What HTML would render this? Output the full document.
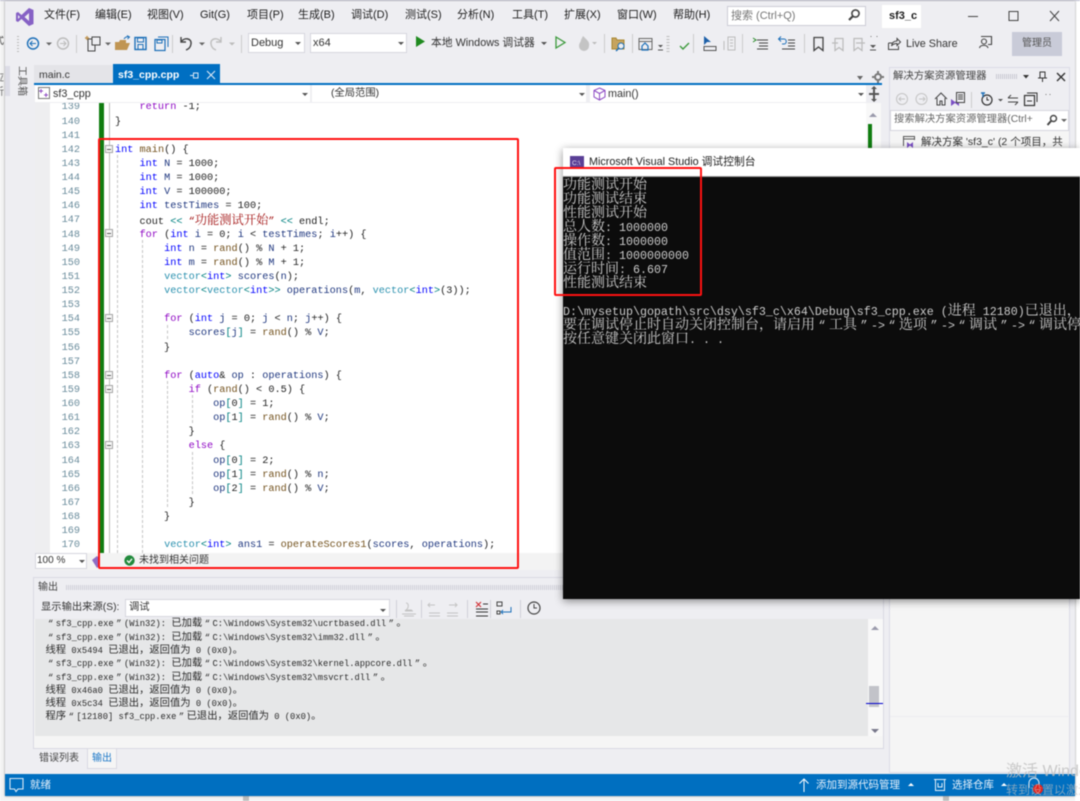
<!DOCTYPE html>
<html lang="zh"><head><meta charset="utf-8"><title>sf3_c</title>
<style>
html,body{margin:0;padding:0;width:1080px;height:801px;overflow:hidden;background:#fff}
#r{position:absolute;left:0;top:0;width:1080px;height:801px;overflow:hidden;filter:blur(.4px);font-family:"Liberation Sans","Noto Sans CJK SC",sans-serif;font-size:11px;color:#1e1e1e}
.a{position:absolute}.t{position:absolute;white-space:nowrap;line-height:14px}
svg{position:absolute;overflow:visible}
.code{position:absolute;font-family:"Liberation Mono",monospace;font-size:10.22px;color:#222}
.l{height:14.14px;line-height:14.14px;white-space:pre}
.code i{font-style:normal;font-family:"Noto Serif CJK SC",serif;font-size:12.27px;line-height:1}
.k{color:#0000ff}.c{color:#8f08c4}.f{color:#74531f}.y{color:#2b91af}.v{color:#1f377f}.o{color:#008080}.s{color:#a31515}
.con{position:absolute;left:0;white-space:pre;font-family:"Liberation Mono",monospace;font-size:11.67px;line-height:14px;color:#cccccc}
.con i{font-style:normal;font-family:"Noto Serif CJK SC",serif;font-size:14px;line-height:1}
.con b{font-weight:normal;display:inline-block;width:14px;text-align:center}
.out{position:absolute;left:45.5px;white-space:pre;font-family:"Liberation Mono",monospace;font-size:8.77px;line-height:13px;color:#2a2a2a}
.out i{font-style:normal;font-family:"Noto Sans CJK SC",sans-serif;font-size:10.3px;line-height:1}
.out b{font-weight:normal;display:inline-block;width:10.3px;text-align:center}
.gd{position:absolute;width:0;border-left:1px dashed #c4c4c4}
.fb{position:absolute;left:105px;width:6px;height:6px;border:1px solid #a5a5a5;background:#f6f6f6}
.fb:after{content:"";position:absolute;left:1px;top:3px;width:4px;height:1px;background:#555}
.combo{position:absolute;background:#fff;border:1px solid #d6d6de;box-sizing:border-box}
.arr{position:absolute;width:0;height:0;border-left:3px solid transparent;border-right:3px solid transparent;border-top:3px solid #555}
</style></head><body><div id="r">

<!-- background window sliver -->
<div class="a" style="left:0;top:0;width:6px;height:801px;background:#f3f3f3"></div>
<div class="a" style="left:0;top:0;width:1080px;height:1px;background:#b9b9cc"></div>
<div class="a" style="left:5px;top:796px;width:1070px;height:5px;background:#f4f4f4"></div>
<div class="a" style="left:243px;top:796px;width:6px;height:5px;background:#bdbdbd"></div>
<div class="a" style="left:943px;top:796px;width:6px;height:5px;background:#bdbdbd"></div>
<div class="a" style="left:0;top:36px;width:5px;height:12px;overflow:hidden"><div class="t" style="left:-6px;top:-1px;font-size:10px;color:#444">式</div></div>
<div class="a" style="left:0;top:72px;width:5px;height:26px;overflow:hidden"><div class="t" style="left:-6px;top:0;font-size:10px;color:#666">应</div><div class="t" style="left:-6px;top:14px;font-size:10px;color:#666">析</div></div>

<!-- main window -->
<div class="a" style="left:5px;top:1px;width:1070px;height:795px;background:#eeeef2;box-shadow:0 0 2px #888"></div>

<!-- logo -->
<svg style="left:15px;top:7px" width="20" height="20" viewBox="0 0 20 20"><path d="M14 1 L18.5 3 V17 L14 19 L6.5 12 L3 15 L1 14 V6 L3 5 L6.5 8 Z M14 6 L9.5 10 L14 14 Z M3 8 V12 L5 10 Z" fill="#8661c5" fill-rule="evenodd"/></svg>

<!-- menu -->
<div class="t" style="left:44px;top:8px">文件(F)</div>
<div class="t" style="left:95px;top:8px">编辑(E)</div>
<div class="t" style="left:147px;top:8px">视图(V)</div>
<div class="t" style="left:200px;top:8px">Git(G)</div>
<div class="t" style="left:247px;top:8px">项目(P)</div>
<div class="t" style="left:298px;top:8px">生成(B)</div>
<div class="t" style="left:351px;top:8px">调试(D)</div>
<div class="t" style="left:405px;top:8px">测试(S)</div>
<div class="t" style="left:457px;top:8px">分析(N)</div>
<div class="t" style="left:512px;top:8px">工具(T)</div>
<div class="t" style="left:564px;top:8px">扩展(X)</div>
<div class="t" style="left:617px;top:8px">窗口(W)</div>
<div class="t" style="left:673px;top:8px">帮助(H)</div>
<div class="combo" style="left:727px;top:6px;width:139px;height:20px;border-color:#ccccd6"></div>
<div class="t" style="left:731px;top:9px;color:#777">搜索 (Ctrl+Q)</div>
<svg style="left:847px;top:8px" width="14" height="14" viewBox="0 0 14 14" fill="none" stroke="#444" stroke-width="1.6"><circle cx="8.5" cy="5.5" r="3.6"/><path d="M6 8 L2 12" stroke-width="2.2"/></svg>
<div class="a" style="left:882px;top:5px;width:39px;height:23px;background:#fff"></div>
<div class="t" style="left:889px;top:9px;font-weight:bold;font-size:11px">sf3_c</div>
<svg style="left:965px;top:8px" width="100" height="16" viewBox="0 0 100 16" fill="none" stroke="#444"><path d="M3 8.5 H13"/><rect x="44" y="3.5" width="9" height="9"/><path d="M85 3 L94 13 M94 3 L85 13"/></svg>

<!-- toolbar -->
<svg style="left:16px;top:33px" width="520" height="22" viewBox="0 0 520 22" fill="none">
<path d="M2 3 V20" stroke="#bbb" stroke-dasharray="1 2" stroke-width="2"/>
<circle cx="17" cy="10.5" r="5.5" stroke="#1c6fb8" stroke-width="1.4"/><path d="M20 10.5 H14 M16.5 8 L14 10.5 L16.5 13" stroke="#1c6fb8"/>
<path d="M30 9.5 h6 l-3 3z" fill="#666"/>
<circle cx="47" cy="10.5" r="5.5" stroke="#bcbcbc" stroke-width="1.4"/><path d="M44 10.5 H50 M47.500 8 L50 10.5 L47.500 13" stroke="#bcbcbc"/>
<path d="M60.500 2 V20" stroke="#ccc"/>
<rect x="72" y="6" width="7" height="12" stroke="#444"/><rect x="76" y="4" width="8" height="8" stroke="#444" fill="#eeeef2"/><path d="M69 5 h4 M71 3 v4" stroke="#c09553" stroke-width="1.4"/>
<path d="M89 9.500 h6 l-3 3z" fill="#666"/>
<path d="M99 9 h4 l1-2 h6 v3 h4 l-3 7 h-12z" fill="#c09553"/><path d="M108 6 q2-3 5-2 M111 2.500 l2.500 1.500 -2 2" stroke="#1c6fb8"/>
<rect x="119" y="4.500" width="11" height="12" stroke="#1c6fb8" stroke-width="1.4"/><rect x="121.500" y="5" width="6" height="4" stroke="#1c6fb8"/><rect x="122" y="11.500" width="5" height="5" stroke="#1c6fb8"/>
<rect x="139" y="6.500" width="10" height="11" stroke="#1c6fb8" stroke-width="1.2"/><path d="M142 4 H152 V14" stroke="#1c6fb8"/><rect x="141" y="7" width="5" height="3" stroke="#1c6fb8"/>
<path d="M156.500 2 V20" stroke="#ccc"/>
<path d="M165 4 V9 H170 M165 9 C168 4 176 5 175 11 C174.500 15 172 16 170 17" stroke="#444" stroke-width="1.4"/>
<path d="M183 9.500 h6 l-3 3z" fill="#666"/>
<path d="M205 4 V9 H200 M205 9 C202 4 194 5 195 11 C195.500 15 198 16 200 17" stroke="#bfbfbf" stroke-width="1.4"/>
<path d="M213 9.500 h6 l-3 3z" fill="#bbb"/>
<path d="M225.500 2 V20" stroke="#ccc"/>
</svg>
<div class="combo" style="left:248px;top:33px;width:57px;height:20px"></div>
<div class="t" style="left:251px;top:36px;font-size:11px;color:#333">Debug</div><div class="arr" style="left:295px;top:42px"></div>
<div class="combo" style="left:310px;top:33px;width:97px;height:20px"></div>
<div class="t" style="left:313px;top:36px;color:#333">x64</div><div class="arr" style="left:398px;top:42px"></div>
<svg style="left:415px;top:35px" width="12" height="14"><path d="M1 1 L10 6.500 L1 12z" fill="#1f8a1f"/></svg>
<div class="t" style="left:431px;top:36px;color:#333;font-size:10.800px">本地 Windows 调试器</div>
<div class="arr" style="left:541px;top:42px"></div>
<svg style="left:552px;top:33px" width="350" height="22" viewBox="0 0 350 22" fill="none">
<path d="M4 4 L13 9.500 L4 15z" stroke="#3c9a3c" stroke-width="1.3"/>
<path d="M31 3 c4 4 7 6 6 10 a5 5 0 0 1-10 0 c0-3 2-4 2-6z" fill="#c4c4c4"/><path d="M40 9 h5 l-2.500 2.500z" fill="#bbb"/>
<path d="M52.500 1 V20" stroke="#ccc"/>
<path d="M60 5 h4 l1 2 h7 v9 h-12z" fill="#c6a45e" stroke="#a98733"/><circle cx="69" cy="13" r="3" stroke="#1c6fb8" fill="#eee"/><path d="M67 15 L64 18" stroke="#1c6fb8" stroke-width="1.400"/>
<path d="M80.500 1 V20" stroke="#ccc"/>
<rect x="87" y="5.500" width="13" height="11" stroke="#666"/><path d="M87 8.500 h13" stroke="#666"/><path d="M90 13 l3-3 3 3 v4 h-6z" stroke="#1c6fb8" stroke-width="1.200"/>
<path d="M106 12 h5 l-2.500 2.500z" fill="#555"/><path d="M106 17 h5" stroke="#555"/>
<path d="M116 3 V19" stroke="#bbb" stroke-dasharray="1 2" stroke-width="3"/>
<path d="M128 13 l3 3 6-6" stroke="#3c9a3c" stroke-width="1.400"/>
<path d="M141.500 1 V20" stroke="#ccc"/>
<path d="M152 3 V12 L155 9 H159z" fill="#1c5fa8"/><rect x="152" y="13.500" width="12" height="4" stroke="#555"/>
<path d="M176 4 h7 v13 h-7z M172 8 v9 M178 7 h3 M178 10 h3 M178 13 h3" stroke="#bcbcbc"/>
<path d="M190.500 1 V20" stroke="#ccc"/>
<path d="M205 7 h11 M207 10 h9 M207 13 h9 M205 16 h11" stroke="#444"/><path d="M201 5 l3 2 -3 2" stroke="#2a8a2a"/>
<path d="M236 7 h7 M236 10 h7 M236 13 h7 M230 16 h13" stroke="#444"/><path d="M227 6 h5 c3 0 3 5 0 5 h-2 M229 3.500 l-2.500 2.500 2.500 2.500" stroke="#1c6fb8"/>
<path d="M252.500 1 V20" stroke="#ccc"/>
<path d="M262 4.500 h9 v13 l-4.500-3.500 -4.500 3.500z" stroke="#444" stroke-width="1.300"/>
<path d="M283 5.500 h8 v12 l-4-3 -4 3z M280 10 h6" stroke="#bbb" stroke-width="1.200"/>
<path d="M302 5.500 h8 v12 l-4-3 -4 3z M304 10 h9" stroke="#bbb" stroke-width="1.200"/>
<path d="M319 3 v1 M325 3 v1" stroke="#777"/><path d="M318 12 h6 l-3 3z" fill="#555"/><path d="M318 17 h6" stroke="#555"/>
</svg>
<svg style="left:887px;top:36px" width="14" height="15" fill="none" stroke="#444"><path d="M1.500 7 V13.500 H11.500 V10 M1.500 7 H5 M4.500 10 C5 6.500 7 5 10 5 V2.500 L13.500 6 L10 9.500 V7.500 C8 7.500 6 8 4.500 10z"/></svg>
<div class="t" style="left:906px;top:37px;color:#333;font-size:10.800px">Live Share</div>
<svg style="left:978px;top:35px" width="15" height="15" fill="none" stroke="#444" stroke-width="1.100"><path d="M3 1.500 H13.500 V9.500 H10"/><circle cx="6" cy="6.500" r="2.500"/><path d="M1.500 13 C2 9.500 9.500 9.500 10 13"/></svg>
<div class="a" style="left:1012px;top:32px;width:50px;height:24px;background:#c9cbd8"></div>
<div class="t" style="left:1022px;top:37px;color:#555;font-size:10px">管理员</div>

<!-- left toolbox strip -->
<div class="a" style="left:5px;top:66px;width:5px;height:30px;background:#dcdce6"></div>
<div class="a" style="left:15px;top:65px;width:12px;height:31px;font-size:10px;line-height:12px;color:#555;writing-mode:vertical-rl;text-orientation:sideways;white-space:nowrap;text-align:center">工具箱</div>

<!-- doc tabs -->
<div class="a" style="left:34px;top:65px;width:80px;height:18px;background:#e4e4e8"></div>
<div class="t" style="left:39px;top:68px;color:#333;font-size:10.500px">main.c</div>
<div class="a" style="left:113px;top:64px;width:107px;height:20px;background:#006fc2"></div>
<div class="t" style="left:118px;top:68px;color:#fff;font-size:10.500px;font-weight:bold">sf3_cpp.cpp</div>
<svg style="left:188px;top:68px" width="30" height="14" fill="none" stroke="#dbe8f5"><path d="M2 7.500 H5 M5.500 5 V10 H10 V5z"/><path d="M19 3 L27 11 M27 3 L19 11" stroke-width="1.100"/></svg>
<div class="a" style="left:34px;top:83px;width:848px;height:2px;background:#006fc2"></div>
<div class="arr" style="left:857px;top:76px;border-top-color:#666;border-left-width:3.500px;border-right-width:3.500px;border-top-width:4px"></div>
<svg style="left:872px;top:71px" width="12" height="12" fill="#777"><circle cx="6" cy="6" r="3" fill="none" stroke="#777" stroke-width="2"/><path d="M5 0 h2 v2 h-2z M5 10 h2 v2 h-2z M0 5 h2 v2 h-2z M10 5 h2 v2 h-2z"/></svg>

<!-- nav bar -->
<div class="a" style="left:35px;top:85px;width:847px;height:18px;background:#eeeef2"></div>
<div class="a" style="left:35px;top:85px;width:275px;height:17px;background:#fff"></div>
<svg style="left:38px;top:87px" width="13" height="13" fill="none"><rect x=".5" y=".5" width="11" height="11" stroke="#777"/><path d="M3 2 v4 M1 4 h4 M8 6 v4 M6 8 h4" stroke="#8e4cc4"/></svg>
<div class="t" style="left:53px;top:87px;font-size:10.800px;color:#333">sf3_cpp</div><div class="arr" style="left:302px;top:93px"></div>
<div class="a" style="left:312px;top:85px;width:274px;height:17px;background:#fff"></div>
<div class="t" style="left:331px;top:87px;font-size:10.300px;color:#333">(全局范围)</div><div class="arr" style="left:579px;top:93px"></div>
<div class="a" style="left:590px;top:85px;width:276px;height:17px;background:#fff"></div>
<svg style="left:593px;top:87px" width="14" height="14" fill="none" stroke="#8e4cc4"><path d="M6.500 1 L12 3.500 V10 L6.500 13 L1 10 V3.500z M1 3.500 L6.500 6.500 L12 3.500 M6.500 6.500 V13"/></svg>
<div class="t" style="left:608px;top:87px;font-size:10.800px;color:#333">main()</div><div class="arr" style="left:858px;top:93px"></div>
<svg style="left:867px;top:86px" width="14" height="16" fill="#555"><path d="M6 3 h2 v4 h4 v2 h-4 v4 h-2 v-4 h-4 v-2 h4z"/><path d="M4 3 L7 0 L10 3z M4 13 L7 16 L10 13z"/></svg>

<!-- editor -->
<div class="a" style="left:35px;top:103px;width:15px;height:450px;background:#eeeef0"></div>
<div class="a" style="left:50px;top:103px;width:816px;height:450px;background:#fff"></div>
<div class="a" style="left:866px;top:103px;width:15px;height:450px;background:#f8f8f8"></div>
<div class="a" style="left:868px;top:124px;width:4px;height:30px;background:#107c10"></div>
<svg style="left:869px;top:112px" width="9" height="6"><path d="M0 5 L4 1 L8 5z" fill="#9a9aab"/></svg>

<div class="a" style="left:50px;top:103px;width:815px;height:450px;overflow:hidden">
<div class="a" style="left:49px;top:0;width:5px;height:450px;background:#107c10"></div>
<div class="a" style="left:59px;top:0;width:1px;height:450px;background:#bdbdbd"></div>
<div class="code" style="left:0;top:-2.600px;width:30px;text-align:right;color:#6a8c9c">
<div class="l">139</div><div class="l">140</div><div class="l">141</div><div class="l">142</div><div class="l">143</div><div class="l">144</div><div class="l">145</div><div class="l">146</div><div class="l">147</div><div class="l">148</div><div class="l">149</div><div class="l">150</div><div class="l">151</div><div class="l">152</div><div class="l">153</div><div class="l">154</div><div class="l">155</div><div class="l">156</div><div class="l">157</div><div class="l">158</div><div class="l">159</div><div class="l">160</div><div class="l">161</div><div class="l">162</div><div class="l">163</div><div class="l">164</div><div class="l">165</div><div class="l">166</div><div class="l">167</div><div class="l">168</div><div class="l">169</div><div class="l">170</div></div>
<div class="code" style="left:65px;top:-2.600px">
<div class="l">    <span class="c">return</span> -1;</div>
<div class="l">}</div>
<div class="l"> </div>
<div class="l"><span class="k">int</span> <span class="f">main</span>() {</div>
<div class="l">    <span class="k">int</span> <span class="v">N</span> = 1000;</div>
<div class="l">    <span class="k">int</span> <span class="v">M</span> = 1000;</div>
<div class="l">    <span class="k">int</span> <span class="v">V</span> = 100000;</div>
<div class="l">    <span class="k">int</span> <span class="v">testTimes</span> = 100;</div>
<div class="l">    cout <span class="o">&lt;&lt;</span> <span class="s">“<i>功能测试开始</i>”</span> <span class="o">&lt;&lt;</span> endl;</div>
<div class="l">    <span class="c">for</span> (<span class="k">int</span> <span class="v">i</span> = 0; <span class="v">i</span> &lt; <span class="v">testTimes</span>; <span class="v">i</span>++) {</div>
<div class="l">        <span class="k">int</span> <span class="v">n</span> = <span class="f">rand</span>() % <span class="v">N</span> + 1;</div>
<div class="l">        <span class="k">int</span> <span class="v">m</span> = <span class="f">rand</span>() % <span class="v">M</span> + 1;</div>
<div class="l">        <span class="y">vector</span><span class="o">&lt;</span><span class="k">int</span><span class="o">&gt;</span> <span class="v">scores</span>(<span class="v">n</span>);</div>
<div class="l">        <span class="y">vector</span><span class="o">&lt;</span><span class="y">vector</span><span class="o">&lt;</span><span class="k">int</span><span class="o">&gt;&gt;</span> <span class="v">operations</span>(<span class="v">m</span>, <span class="y">vector</span><span class="o">&lt;</span><span class="k">int</span><span class="o">&gt;</span>(3));</div>
<div class="l"> </div>
<div class="l">        <span class="c">for</span> (<span class="k">int</span> <span class="v">j</span> = 0; <span class="v">j</span> &lt; <span class="v">n</span>; <span class="v">j</span>++) {</div>
<div class="l">            <span class="v">scores</span><span class="o">[</span><span class="v">j</span><span class="o">]</span> = <span class="f">rand</span>() % <span class="v">V</span>;</div>
<div class="l">        }</div>
<div class="l"> </div>
<div class="l">        <span class="c">for</span> (<span class="k">auto</span>&amp; <span class="v">op</span> : <span class="v">operations</span>) {</div>
<div class="l">            <span class="c">if</span> (<span class="f">rand</span>() &lt; 0.5) {</div>
<div class="l">                <span class="v">op</span><span class="o">[</span>0<span class="o">]</span> = 1;</div>
<div class="l">                <span class="v">op</span><span class="o">[</span>1<span class="o">]</span> = <span class="f">rand</span>() % <span class="v">V</span>;</div>
<div class="l">            }</div>
<div class="l">            <span class="c">else</span> {</div>
<div class="l">                <span class="v">op</span><span class="o">[</span>0<span class="o">]</span> = 2;</div>
<div class="l">                <span class="v">op</span><span class="o">[</span>1<span class="o">]</span> = <span class="f">rand</span>() % <span class="v">n</span>;</div>
<div class="l">                <span class="v">op</span><span class="o">[</span>2<span class="o">]</span> = <span class="f">rand</span>() % <span class="v">V</span>;</div>
<div class="l">            }</div>
<div class="l">        }</div>
<div class="l"> </div>
<div class="l">        <span class="y">vector</span><span class="o">&lt;</span><span class="k">int</span><span class="o">&gt;</span> <span class="v">ans1</span> = <span class="f">operateScores1</span>(<span class="v">scores</span>, <span class="v">operations</span>);</div>
</div>
<!-- indent guides (editor-relative) -->
<div class="gd" style="left:67px;top:52px;height:398px"></div>
<div class="gd" style="left:92px;top:137px;height:313px"></div>
<div class="gd" style="left:117px;top:222px;height:14px"></div>
<div class="gd" style="left:117px;top:278px;height:126px"></div>
<div class="gd" style="left:142px;top:292px;height:28px"></div>
<div class="gd" style="left:142px;top:349px;height:42px"></div>
</div>
<div class="fb" style="top:145px"></div><div class="fb" style="top:229px"></div><div class="fb" style="top:314px"></div><div class="fb" style="top:371px"></div><div class="fb" style="top:385px"></div><div class="fb" style="top:441px"></div>

<!-- editor status -->
<div class="a" style="left:35px;top:553px;width:847px;height:17px;background:#f3f3f3"></div>
<div class="combo" style="left:35px;top:553px;width:52px;height:16px"></div>
<div class="t" style="left:37px;top:554px;font-size:10px;color:#333">100 %</div><div class="arr" style="left:79px;top:560px"></div>
<svg style="left:90px;top:554px" width="10" height="14"><path d="M2 6 l5-4 2 2 v8 l-2 2z" fill="#8e6cc4"/></svg>
<svg style="left:124px;top:555px" width="11" height="11"><circle cx="5.500" cy="5.500" r="5.200" fill="#218a3c"/><path d="M3 5.500 L5 7.500 L8 3.800" fill="none" stroke="#fff" stroke-width="1.300"/></svg>
<div class="t" style="left:139px;top:554px;font-size:10px;color:#333">未找到相关问题</div>

<!-- output panel -->
<div class="a" style="left:33px;top:577px;width:851px;height:172px;background:#f5f5f5;border:1px solid #d9d9e3;box-sizing:border-box"></div>
<div class="a" style="left:34px;top:578px;width:849px;height:41px;background:#eeeef2"></div>
<div class="t" style="left:38px;top:581px;font-size:10px;color:#444">输出</div>
<div class="a" style="left:66px;top:585px;width:815px;height:5px;background:repeating-linear-gradient(90deg,#cfcfd8 0 1px,transparent 1px 2px)"></div>
<div class="t" style="left:41px;top:601px;font-size:10.300px;color:#333">显示输出来源(S):</div>
<div class="combo" style="left:125px;top:599px;width:265px;height:18px"></div>
<div class="t" style="left:129px;top:601px;font-size:10.300px;color:#333">调试</div><div class="arr" style="left:380px;top:609px"></div>
<svg style="left:395px;top:598px" width="160" height="22" viewBox="0 0 160 22" fill="none">
<path d="M1.500 2 V20 M26.500 2 V20 M72.500 2 V20 M95.500 2 V20 M125.500 2 V20" stroke="#d0d0d8"/>
<path d="M7 16 h14 M9 18 h10 M10 13 h8 M11 5 c3 0 3 5 0 7 h6" stroke="#c4c4c4"/>
<path d="M34 15 h11 M34 18 h11 M40 7 h-7 M35 5 l-2 2 2 2" stroke="#c4c4c4"/>
<path d="M52 15 h11 M52 18 h11 M54 7 h8 M60 5 l2 2 -2 2" stroke="#c4c4c4"/>
<path d="M81 11 h12 M81 14 h12 M81 18 h12" stroke="#333"/><path d="M81 4 l5 5 M86 4 l-5 5" stroke="#d13438" stroke-width="1.200"/><path d="M88 6 h5" stroke="#333"/>
<path d="M106 14 h10 v-5 M106 14 l2-2 M106 14 l2 2" stroke="#1c6fb8"/><rect x="102" y="4" width="5" height="4" stroke="#444"/><rect x="102" y="13" width="3" height="3" stroke="#444"/>
<circle cx="139" cy="10" r="6" stroke="#444" stroke-width="1.200"/><path d="M139 6 v4 h3" stroke="#444"/>
</svg>
<div class="a" style="left:35px;top:619px;width:833px;height:117px;background:#e6e7e8;overflow:hidden"></div>
<div class="a" style="left:868px;top:619px;width:15px;height:117px;background:#f8f8f8"></div>
<svg style="left:871px;top:625px" width="9" height="6"><path d="M0 5 L4 1 L8 5z" fill="#9a9aab"/></svg>
<svg style="left:871px;top:728px" width="9" height="6"><path d="M0 1 L4 5 L8 1z" fill="#77778a"/></svg>
<div class="a" style="left:869px;top:686px;width:10px;height:21px;background:#c2c3c9"></div>
<div class="a" style="left:866px;top:703px;width:17px;height:1px;background:#0000cc"></div>

<div class="out" style="top:616.500px"><b>“</b>sf3_cpp.exe<b>”</b>(Win32): <i>已加载</i><b>“</b>C:\Windows\System32\ucrtbased.dll<b>”</b><i>。</i></div>
<div class="out" style="top:630.500px"><b>“</b>sf3_cpp.exe<b>”</b>(Win32): <i>已加载</i><b>“</b>C:\Windows\System32\imm32.dll<b>”</b><i>。</i></div>
<div class="out" style="top:643.500px"><i>线程</i> 0x5494 <i>已退出&#xFF0C;返回值为</i> 0 (0x0)<i>。</i></div>
<div class="out" style="top:656.500px"><b>“</b>sf3_cpp.exe<b>”</b>(Win32): <i>已加载</i><b>“</b>C:\Windows\System32\kernel.appcore.dll<b>”</b><i>。</i></div>
<div class="out" style="top:670.500px"><b>“</b>sf3_cpp.exe<b>”</b>(Win32): <i>已加载</i><b>“</b>C:\Windows\System32\msvcrt.dll<b>”</b><i>。</i></div>
<div class="out" style="top:683.500px"><i>线程</i> 0x46a0 <i>已退出&#xFF0C;返回值为</i> 0 (0x0)<i>。</i></div>
<div class="out" style="top:696.500px"><i>线程</i> 0x5c34 <i>已退出&#xFF0C;返回值为</i> 0 (0x0)<i>。</i></div>
<div class="out" style="top:709.500px"><i>程序</i><b>“</b>[12180] sf3_cpp.exe<b>”</b><i>已退出&#xFF0C;返回值为</i> 0 (0x0)<i>。</i></div>

<div class="t" style="left:39px;top:752px;font-size:10px;color:#444">错误列表</div>
<div class="a" style="left:87px;top:749px;width:30px;height:20px;background:#f5f5f5;border:1px solid #d9d9e3;border-top:0;box-sizing:border-box"></div>
<div class="t" style="left:92px;top:752px;font-size:10px;color:#1c78c8">输出</div>

<!-- solution explorer -->
<div class="a" style="left:889px;top:67px;width:181px;height:706px;background:#f5f5f5;border:1px solid #dcdce6;box-sizing:border-box"></div>
<div class="a" style="left:890px;top:68px;width:179px;height:44px;background:#eeeef2"></div>
<div class="t" style="left:893px;top:70px;font-size:10.400px;color:#444">解决方案资源管理器</div>
<div class="a" style="left:996px;top:74px;width:22px;height:5px;background:repeating-linear-gradient(90deg,#c9c9d2 0 1px,transparent 1px 2px)"></div>
<svg style="left:1022px;top:70px" width="46" height="14" fill="none"><path d="M1 5 h6 l-3 3.500z" fill="#333"/><path d="M18 2 h5 v6 h-5z M20.500 8 v4 M16 8 h9" stroke="#333"/><path d="M35 3 L43 11 M43 3 L35 11" stroke="#333" stroke-width="1.400"/></svg>
<svg style="left:893px;top:90px" width="170" height="20" viewBox="0 0 170 20" fill="none">
<circle cx="9" cy="9" r="5.500" stroke="#c4c4c4"/><path d="M12 9 H6 M8 7 L6 9 L8 11" stroke="#c4c4c4"/>
<circle cx="28.500" cy="9" r="5.500" stroke="#c4c4c4"/><path d="M26 9 H32 M30 7 L32 9 L30 11" stroke="#c4c4c4"/>
<path d="M42 9 L48 3 L54 9 M44 8 V15 H47 V11 H49 V15 H52 V8" stroke="#444"/>
<path d="M58 9 l4 3 4-3 v7 l-4-3 -4 3z" fill="#7a4fc4"/><rect x="63.500" y="2.500" width="8" height="10" stroke="#444" fill="#eeeef2"/><path d="M65 5 h5 M65 7 h5 M65 9 h5" stroke="#444"/>
<path d="M78.500 2 V18" stroke="#ccc"/>
<circle cx="94" cy="10" r="5" stroke="#333" stroke-width="1.200"/><path d="M94 7 v3 h2" stroke="#333"/><path d="M88 3 h4 M90 3 v4" stroke="#1c6fb8" stroke-width="1.400"/>
<path d="M105 9 h5 l-2.500 2.500z" fill="#555"/>
<path d="M115 8 h10 M115 8 l3-3 M125 12 h-10 M125 12 l-3 3" stroke="#444"/>
<rect x="131.500" y="5.500" width="10" height="10" stroke="#333" stroke-width="1.200"/><path d="M134 3 H144 V12 M134 11 h5" stroke="#333"/>
<path d="M153 4 v1 M157 4 v1" stroke="#777"/>
</svg>
<div class="combo" style="left:890px;top:110px;width:179px;height:21px"></div>
<div class="t" style="left:894px;top:113px;font-size:10.300px;color:#666;width:150px;overflow:hidden">搜索解决方案资源管理器(Ctrl+</div>
<svg style="left:1046px;top:114px" width="22" height="14" fill="none" stroke="#444"><circle cx="7.500" cy="4.500" r="3" stroke-width="1.400"/><path d="M5 7 L1.500 11" stroke-width="2"/><path d="M15 5 h6 l-3 3z" fill="#666" stroke="none"/></svg>
<svg style="left:902px;top:134px" width="15" height="15" fill="none"><path d="M1.500 12 V2.500 H12.500 V6" stroke="#555"/><path d="M1.500 5 H12.500" stroke="#555"/><path d="M5 8 l3 2.500 3-2.500 v6 l-3-2.500 -3 2.500z" fill="#7a4fc4"/></svg>
<div class="t" style="left:921px;top:135px;width:148px;overflow:hidden;font-size:10.500px;color:#333">解决方案 'sf3_c' (2 个项目&#xFF0C;共</div>
<div class="a" style="left:890px;top:716px;width:178px;height:1px;background:#ececf0"></div>

<!-- status bar -->
<div class="a" style="left:5px;top:774px;width:1070px;height:22px;background:#006fc0"></div>
<svg style="left:9px;top:777px" width="16" height="16" fill="none" stroke="#dce9f5" stroke-width="1.100"><path d="M1 1.500 H14 V12 H9 L7 14.500 L5.500 12 H1z"/></svg>
<div class="t" style="left:30px;top:778px;font-size:10.500px;color:#e5f0fa">就绪</div>
<svg style="left:797px;top:777px" width="14" height="16" fill="none" stroke="#fff"><path d="M7 15 V2 M2.500 6.500 L7 2 L11.500 6.500"/></svg>
<div class="t" style="left:816px;top:778px;font-size:10.500px;color:#e5f0fa">添加到源代码管理</div>
<svg style="left:907px;top:782px" width="8" height="5"><path d="M1 4 L4 1 L7 4z" fill="#fff"/></svg>
<svg style="left:933px;top:778px" width="14" height="14" fill="none" stroke="#e5f0fa"><path d="M1 1.500 H13 M2.500 1.500 V12.500 H11.500 V1.500 M5 5 V9 H9 V5" /></svg>
<div class="t" style="left:952px;top:778px;font-size:10.500px;color:#e5f0fa">选择仓库</div>
<svg style="left:1000px;top:782px" width="8" height="5"><path d="M1 4 L4 1 L7 4z" fill="#fff"/></svg>
<svg style="left:1027px;top:776px" width="16" height="18" fill="none" stroke="#e5f0fa"><path d="M2 12 V7 a5 5 0 0 1 10 0 V12"/></svg>
<div class="a" style="left:1033px;top:784px;width:10px;height:10px;border-radius:50%;background:#e5201a"></div>

<!-- console window -->
<div class="a" style="left:563px;top:148px;width:517px;height:451px;background:#0c0c0c;box-shadow:0 2px 8px rgba(0,0,0,.45)"></div>
<div class="a" style="left:563px;top:148px;width:517px;height:29px;background:#fff;border-bottom:1px solid #999;box-sizing:border-box"></div>
<svg style="left:570px;top:156px" width="14" height="12"><rect width="14" height="12" fill="#5a3f96"/><text x="2" y="9" font-family="Liberation Sans" font-size="6.500" fill="#e6e0f2">C:\</text></svg>
<div class="t" style="left:589px;top:155px;font-size:10.800px;color:#222">Microsoft Visual Studio 调试控制台</div>
<div class="a" style="left:563px;top:177px;width:517px;height:422px;overflow:hidden">
<div class="con" style="top:0"><i>功能测试开始</i></div>
<div class="con" style="top:14px"><i>功能测试结束</i></div>
<div class="con" style="top:28px"><i>性能测试开始</i></div>
<div class="con" style="top:42px"><i>总人数</i>: 1000000</div>
<div class="con" style="top:56px"><i>操作数</i>: 1000000</div>
<div class="con" style="top:70px"><i>值范围</i>: 1000000000</div>
<div class="con" style="top:84px"><i>运行时间</i>: 6.607</div>
<div class="con" style="top:98px"><i>性能测试结束</i></div>
<div class="con" style="top:126px">D:\mysetup\gopath\src\dsy\sf3_c\x64\Debug\sf3_cpp.exe (<i>进程</i> 12180)<i>已退出&#xFF0C;代码为</i> 0<i>。</i></div>
<div class="con" style="top:140px"><i>要在调试停止时自动关闭控制台&#xFF0C;请启用</i><b>“</b><i>工具</i><b>”</b>-&gt;<b>“</b><i>选项</i><b>”</b>-&gt;<b>“</b><i>调试</i><b>”</b>-&gt;<b>“</b><i>调试停止时自动关闭控制台</i><b>”</b><i>。</i></div>
<div class="con" style="top:154px"><i>按任意键关闭此窗口</i>. . .</div>
</div>

<!-- red annotation rects -->
<div class="a" style="left:98px;top:138px;width:421px;height:431px;border:2px solid #f11;border-radius:2px;box-sizing:border-box"></div>
<div class="a" style="left:554px;top:167px;width:148px;height:129px;border:2px solid #f11;border-radius:2px;box-sizing:border-box"></div>

<!-- watermark -->
<div class="t" style="left:1006px;top:763px;font-size:16px;line-height:18px;color:rgba(190,190,190,.8)">激活 Windows</div>
<div class="t" style="left:1006px;top:783px;font-size:12px;line-height:14px;color:rgba(190,190,190,.65)">转到设置以激活</div>
</div></body></html>
